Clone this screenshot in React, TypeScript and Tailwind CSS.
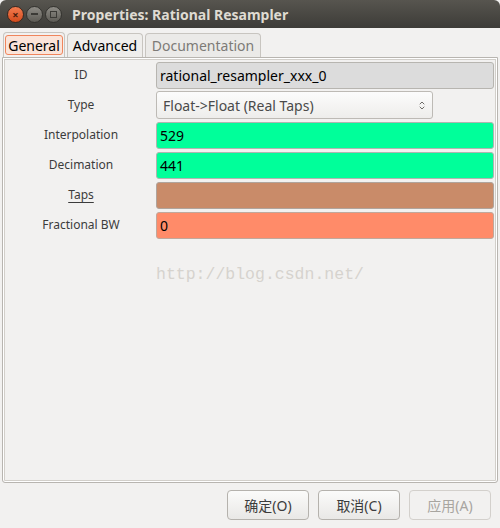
import { ChevronUp, ChevronDown } from "lucide-react";

const font = { fontFamily: '"Noto Sans", "DejaVu Sans", "Noto Sans CJK SC", sans-serif' };

function Field({ label, underline, children }: { label: string; underline?: boolean; children: React.ReactNode }) {
  return (
    <div className="flex items-center h-[30px]">
      <div className="w-[150px] shrink-0 text-center text-[12px] text-[#3c3c3c]">
        <span className={underline ? "underline underline-offset-[3px]" : ""}>{label}</span>
      </div>
      {children}
    </div>
  );
}

export default function App() {
  return (
    <div className="w-[500px] h-[528px] bg-[#f2f1f0] flex flex-col overflow-hidden" style={font}>
      {/* title bar */}
      <div className="h-[28px] shrink-0 rounded-t-[6px] bg-gradient-to-b from-[#57554f] to-[#3d3c38] flex items-center px-[7px]">
        <div className="flex items-center gap-[2px]">
          <div className="w-[17px] h-[17px] rounded-full bg-gradient-to-b from-[#f37b4e] to-[#d34b1b] border border-[#3a2820] flex items-center justify-center text-[#4b1d0c] text-[11px] font-bold leading-none">×</div>
          <div className="w-[17px] h-[17px] rounded-full bg-gradient-to-b from-[#8e8c86] to-[#5d5b55] border border-[#34332f] flex items-center justify-center">
            <div className="w-[7px] h-[2px] bg-[#3b3a36]" />
          </div>
          <div className="w-[17px] h-[17px] rounded-full bg-gradient-to-b from-[#8e8c86] to-[#5d5b55] border border-[#34332f] flex items-center justify-center">
            <div className="w-[7px] h-[7px] border-[1.5px] border-[#3b3a36]" />
          </div>
        </div>
        <div className="ml-[10px] text-[14px] font-bold text-[#dfdbd2]">Properties: Rational Resampler</div>
      </div>

      {/* tabs */}
      <div className="flex items-end px-[3px] mt-[4px] h-[25px] gap-[2px]">
        <div className="h-[25px] w-[62px] border border-b-0 border-[#c8c5c0] rounded-t-[4px] bg-[#f2f1f0] flex items-center justify-center">
          <div className="px-[2px] h-[20px] border border-[#f0855c] rounded-[3px] bg-[#fbe4d9] flex items-center text-[14px] text-black">General</div>
        </div>
        <div className="h-[24px] w-[76px] border border-b-0 border-[#c8c5c0] rounded-t-[4px] bg-[#efeeec] flex items-center justify-center text-[14px] text-black">Advanced</div>
        <div className="h-[24px] w-[116px] border border-b-0 border-[#c8c5c0] rounded-t-[4px] bg-[#ebeae8] flex items-center justify-center text-[14px] text-[#7d7b77]">Documentation</div>
      </div>

      {/* panel */}
      <div className="mx-[2px] h-[426px] border border-[#b8b5b0] shadow-[inset_0_0_0_1px_#ffffff,inset_0_0_0_2px_#d2cfca] rounded-b-[3px] pt-[2px] pl-[3px] pr-[3px] flex flex-col gap-0 relative">
        <Field label="ID">
          <div className="flex-1 h-[27px] rounded-[3px] border border-[#b7b5b0] bg-[#dcdcdc] flex items-center px-[3px] text-[14px] text-black">rational_resampler_xxx_0</div>
        </Field>
        <Field label="Type">
          <div className="w-[277px] h-[28px] rounded-[3px] border border-[#bdbab5] bg-gradient-to-b from-[#fcfcfc] to-[#eeedeb] flex items-center px-[6px] text-[14px] text-[#4a4a4a]">
            <span className="flex-1">Float-&gt;Float (Real Taps)</span>
            <div className="flex flex-col items-center -space-y-[3px] text-[#6f6d69]">
              <ChevronUp size={8} strokeWidth={3} />
              <ChevronDown size={8} strokeWidth={3} />
            </div>
          </div>
        </Field>
        <Field label="Interpolation">
          <div className="flex-1 h-[27px] rounded-[3px] border border-[#b0b5b0] bg-[#00ff9a] flex items-center px-[3px] text-[14px] text-black">529</div>
        </Field>
        <Field label="Decimation">
          <div className="flex-1 h-[27px] rounded-[3px] border border-[#b0b5b0] bg-[#00ff9a] flex items-center px-[3px] text-[14px] text-black">441</div>
        </Field>
        <Field label="Taps" underline>
          <div className="flex-1 h-[27px] rounded-[3px] border border-[#b0a49c] bg-[#c98b69] flex items-center px-[3px] text-[14px] text-black" />
        </Field>
        <Field label="Fractional BW">
          <div className="flex-1 h-[27px] rounded-[3px] border border-[#c0a89c] bg-[#ff8b69] flex items-center px-[3px] text-[14px] text-black">0</div>
        </Field>
        <div className="absolute left-[153px] top-[205px] text-[16.5px] text-[#d6d3ce]" style={{ fontFamily: '"Liberation Mono", "Courier New", monospace' }}>
          http://blog.csdn.net/
        </div>
      </div>

      {/* buttons */}
      <div className="flex justify-end gap-[9px] pr-[9px] mt-[7px]">
        <button className="w-[82px] h-[30px] rounded-[4px] border border-[#b5b2ad] bg-gradient-to-b from-[#fbfbfa] to-[#e9e8e6] text-[14px] text-[#3c3c3c]">确定(O)</button>
        <button className="w-[82px] h-[30px] rounded-[4px] border border-[#b5b2ad] bg-gradient-to-b from-[#fbfbfa] to-[#e9e8e6] text-[14px] text-[#3c3c3c]">取消(C)</button>
        <button className="w-[82px] h-[30px] rounded-[4px] border border-[#d3d0cc] bg-[#f2f1f0] text-[14px] text-[#a8a5a0]">应用(A)</button>
      </div>
    </div>
  );
}
